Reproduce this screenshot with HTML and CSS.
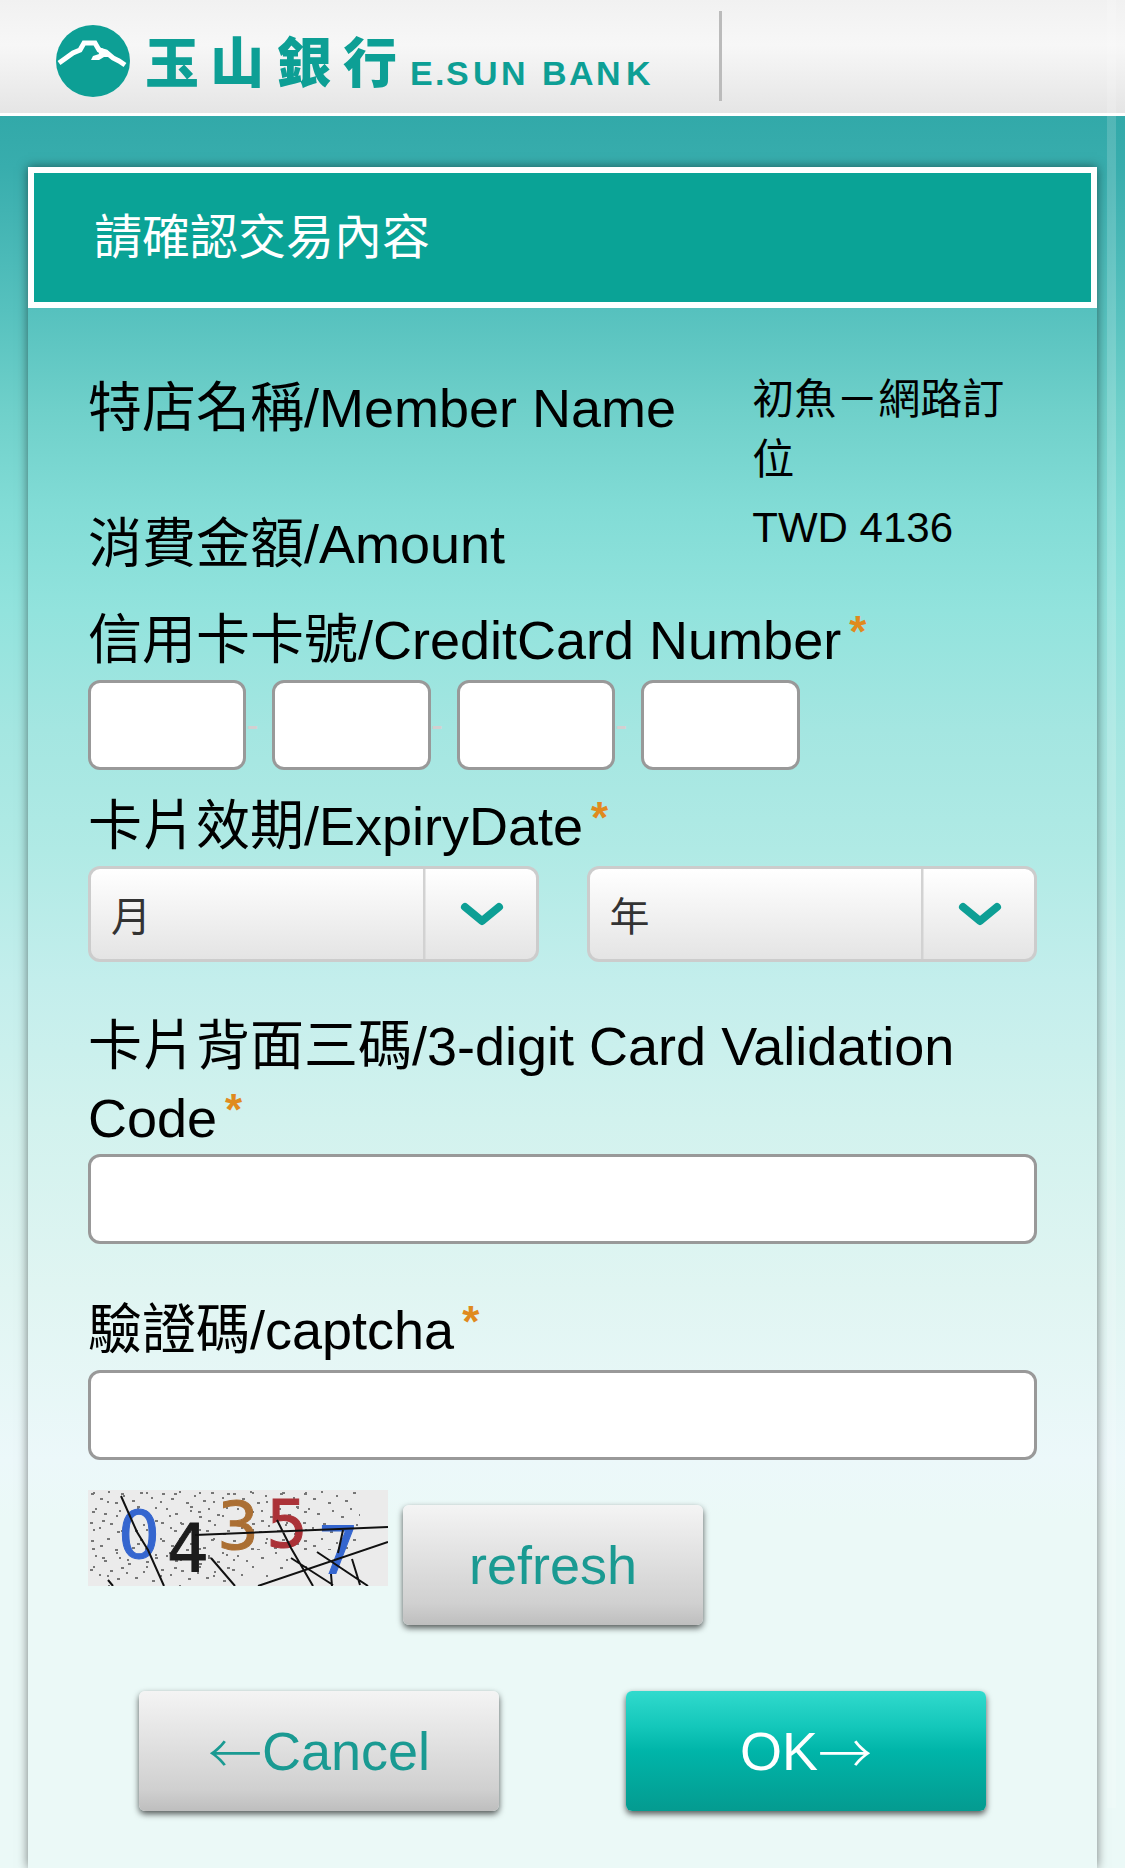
FILE: index.html
```html
<!DOCTYPE html>
<html lang="zh-Hant">
<head>
  <meta charset="UTF-8">
  <meta name="viewport" content="width=device-width, initial-scale=1.0">
  <title>玉山銀行 E.SUN BANK</title>
  <link rel="stylesheet" href="styles.css">
</head>
<body>
  <header class="site-header">
    <svg class="logo" width="600" height="80" viewBox="0 0 600 80" role="img" aria-label="玉山銀行 E.SUN BANK">
      <ellipse cx="37" cy="40" rx="37" ry="36"/>
      <path class="ridge" d="M3 42 L10 37 L17 32 L24 29 L28 22 L39 22 L43 29 L50 31 L57 37 L63 40 L69 44"/>
      <path class="ridge-snow" d="M41 25 L52 30 L56 36 L48 36 L43 39 L35 39 L37 35 L43 33 Z"/>
      <text class="logo-zh" x="89 154 221 287" y="62">玉山銀行</text>
      <text class="logo-en" x="354 379 390 417 445 470 486 513 540 570" y="64">E.SUN BANK</text>
    </svg>
    <div class="header-divider"></div>
  </header>

  <main class="panel">
    <h1 class="panel-title">請確認交易內容</h1>

    <form class="panel-body">
      <dl class="info">
        <dt>特店名稱/Member Name</dt>
        <dd>初魚－網路訂位</dd>
        <dt class="info-amount">消費金額/Amount</dt>
        <dd>TWD 4136</dd>
      </dl>

      <div class="field">
        <label for="card1">信用卡卡號/CreditCard Number<span class="required">*</span></label>
        <div class="card-number">
          <input type="text" id="card1" maxlength="4">
          <span class="dash">-</span>
          <input type="text" aria-label="card number 2" maxlength="4">
          <span class="dash">-</span>
          <input type="text" aria-label="card number 3" maxlength="4">
          <span class="dash">-</span>
          <input type="text" aria-label="card number 4" maxlength="4">
        </div>
      </div>

      <div class="field field-expiry">
        <label for="month">卡片效期/ExpiryDate<span class="required">*</span></label>
        <div class="expiry">
          <div class="select">
            <select id="month"><option>月</option></select>
            <svg class="arrow" width="116" height="90" viewBox="0 0 116 90">
              <path class="arrow-line" d="M1 0 V90"/>
              <path class="arrow-mark" d="M42 38 L59 52 L76 38"/>
            </svg>
          </div>
          <div class="select">
            <select aria-label="year"><option>年</option></select>
            <svg class="arrow" width="116" height="90" viewBox="0 0 116 90">
              <path class="arrow-line" d="M1 0 V90"/>
              <path class="arrow-mark" d="M42 38 L59 52 L76 38"/>
            </svg>
          </div>
        </div>
      </div>

      <div class="field field-cvc">
        <label for="cvc">卡片背面三碼/3-digit Card Validation Code<span class="required">*</span></label>
        <input type="text" id="cvc" maxlength="3">
      </div>

      <div class="field field-captcha">
        <label for="captcha">驗證碼/captcha<span class="required">*</span></label>
        <input type="text" id="captcha">
      </div>

      <div class="captcha-row">
        <svg class="captcha" width="300" height="96" viewBox="0 0 300 96" role="img" aria-label="captcha">
          <defs>
            <pattern id="noise1" width="71" height="47" patternUnits="userSpaceOnUse">
              <path d="M3 4h3M12 9h3M20 2h2M27 13h3M35 6h2M44 11h3M52 3h3M63 8h2M7 19h2M16 24h3M31 21h2M40 27h3M49 19h2M58 25h3M67 18h2M2 33h3M11 38h2M22 34h3M29 42h3M38 36h2M47 41h3M55 35h2M64 44h3"/>
            </pattern>
            <pattern id="noise2" width="53" height="37" patternUnits="userSpaceOnUse">
              <path d="M5 3h2M19 12h2M33 4h3M49 17h3M4 22h3M14 31h3M28 26h2M39 33h2"/>
            </pattern>
          </defs>
          <rect width="300" height="96" fill="#ebebeb"/>
          <rect width="272" height="60" fill="url(#noise1)"/>
          <rect y="60" width="160" height="36" fill="url(#noise1)"/>
          <rect width="220" height="90" fill="url(#noise2)"/>
          <g class="digits">
            <text x="30" y="68" fill="#3566cf" stroke="#3566cf">0</text>
            <text x="79" y="81" fill="#1c1c1c" stroke="#1c1c1c">4</text>
            <text x="129" y="59" fill="#ab6f33" stroke="#ab6f33">3</text>
            <text x="178" y="57" fill="#ab3238" stroke="#ab3238">5</text>
            <text x="229" y="84" fill="#3566cf" stroke="#3566cf">7</text>
          </g>
          <path class="scratch" d="M33 6L49 42L60 60L76 96M107 45L300 37M123 68L147 96M20 90L25 96M170 96L300 52M189 30L203 58L225 96M203 68L245 95M229 62L280 96M264 69L272 95M255 40L250 63M243 84L244 96"/>
        </svg>
        <button type="button" class="btn btn-refresh">refresh</button>
      </div>

      <div class="actions">
        <button type="button" class="btn"><span class="btn-arrow">←</span>Cancel</button>
        <button type="submit" class="btn btn-ok">OK<span class="btn-arrow">→</span></button>
      </div>
    </form>
  </main>
  <div class="scroll-mark"></div>
</body>
</html>
```
FILE: styles.css
```css
* {
  box-sizing: border-box;
}
body {
  position: relative;
  display: flex;
  flex-direction: column;
  min-height: 100vh;
  margin: 0;
  font-family: "Liberation Sans", "Noto Sans CJK TC", sans-serif;
  font-size: 54px;
  line-height: 72px;
  color: #000;
  background: linear-gradient(#32a9a9 116px, #38adad 167px, #56c1be 310px, #6fd0ca 410px, #82dcd6 510px, #92e3dd 610px, #a4e6e1 730px, #b0eae5 850px, #c3eeec 980px, #d2f2ee 1120px, #e0f5f2 1290px, #ecf8fa 1460px, #ebf9f7 1520px);
}
.site-header {
  display: flex;
  align-items: flex-start;
  height: 116px;
  padding: 11px 56px;
  border-bottom: 3px solid #fff;
  background: linear-gradient(#f1f1f1, #f7f7f7 40%, #e5e5e5);
}
.logo {
  flex: none;
  margin-top: 10px;
  fill: #0d9f95;
}
.ridge {
  fill: none;
  stroke: #fff;
  stroke-width: 5;
}
.ridge-snow {
  fill: #fff;
}
.logo-zh {
  font-family: "Noto Sans CJK TC", sans-serif;
  font-weight: 900;
  font-size: 54px;
}
.logo-en {
  font-weight: bold;
  font-size: 34px;
}
.header-divider {
  width: 3px;
  height: 90px;
  margin-left: 63px;
  background: #bbb;
}

.panel {
  flex: 1;
  margin: 51px 28px 0;
  box-shadow: 0 0 10px rgba(0, 0, 0, 0.5);
}
.panel-title {
  margin: 0;
  padding: 29px 60px 28px;
  border: 6px solid #fff;
  background: #0aa396;
  color: #fff;
  font-size: 48px;
  font-weight: 400;
}
.panel-body {
  padding: 60px 60px 56px;
}
.info {
  display: grid;
  grid-template-columns: 70% 1fr;
  row-gap: 6px;
  margin: 0 0 24px;
}
.info dt {
  padding-top: 4px;
}
.info .info-amount {
  padding-top: 12px;
}
.info dd {
  margin: 0;
  padding-top: 2px;
  font-size: 42px;
  line-height: 60px;
}

.field label {
  display: block;
  margin-bottom: 4px;
}
.required {
  margin-left: 8px;
  color: #e08a1e;
  font-size: 44px;
  font-weight: bold;
  line-height: 1;
  vertical-align: 12px;
}
.field input {
  display: block;
  width: 100%;
  height: 90px;
  padding: 0 18px;
  border: 3px solid #999;
  border-radius: 12px;
  background: #fff;
  font: inherit;
}
.card-number {
  display: flex;
  align-items: center;
  width: 75%;
}
.card-number input {
  flex: 1;
  min-width: 0;
}
.dash {
  flex: none;
  width: 26px;
  color: #d3cfd0;
  font-size: 36px;
}
.field-expiry {
  margin-top: 20px;
}
.expiry {
  display: flex;
  gap: 48px;
}
.select {
  position: relative;
  flex: 1;
}
.select select {
  display: block;
  appearance: none;
  width: 100%;
  height: 96px;
  padding: 6px 116px 0 20px;
  border: 3px solid #ccc;
  border-radius: 12px;
  background: linear-gradient(#fff, #e4e4e4);
  color: #333;
  font: inherit;
  font-size: 40px;
}
.arrow {
  position: absolute;
  top: 3px;
  right: 0;
  fill: none;
  pointer-events: none;
}
.arrow-line {
  stroke: #d2d2d2;
  stroke-width: 3;
}
.arrow-mark {
  stroke: #0d9f95;
  stroke-width: 8;
  stroke-linecap: round;
  stroke-linejoin: round;
}
.field-cvc {
  margin-top: 48px;
}
.field-cvc label {
  margin-bottom: 0;
}
.field-captcha {
  margin-top: 50px;
}

.captcha-row {
  display: flex;
  align-items: flex-start;
  gap: 15px;
  margin-top: 30px;
}
.digits {
  font-family: "DejaVu Sans", sans-serif;
  font-size: 66px;
  stroke-width: 1;
}
.captcha pattern path {
  stroke: #777;
  stroke-width: 2;
}
.scratch {
  fill: none;
  stroke: #111;
  stroke-width: 2;
}

.btn {
  width: 360px;
  height: 120px;
  padding: 0;
  border: 0;
  border-radius: 6px;
  background: linear-gradient(#f4f4f4, #d0d0d0 82%, #bebebe);
  box-shadow: 0 3px 6px rgba(0, 0, 0, 0.65);
  color: #1a9a92;
  font: inherit;
}
.btn-arrow {
  font-family: "Noto Sans CJK TC", sans-serif;
  font-weight: 300;
  line-height: 1;
  vertical-align: -4px;
}
.btn-refresh {
  width: 300px;
  margin-top: 15px;
}
.btn-ok {
  background: linear-gradient(#31dacd, #13c7ba 30%, #00b5a9 50%, #049b90);
  color: #fff;
}
.actions {
  display: flex;
  justify-content: space-between;
  margin-top: 66px;
  padding: 0 51px;
}
.scroll-mark {
  position: absolute;
  top: 0;
  right: 9px;
  width: 9px;
  height: 1808px;
  background: rgba(255, 255, 255, 0.16);
}
```
